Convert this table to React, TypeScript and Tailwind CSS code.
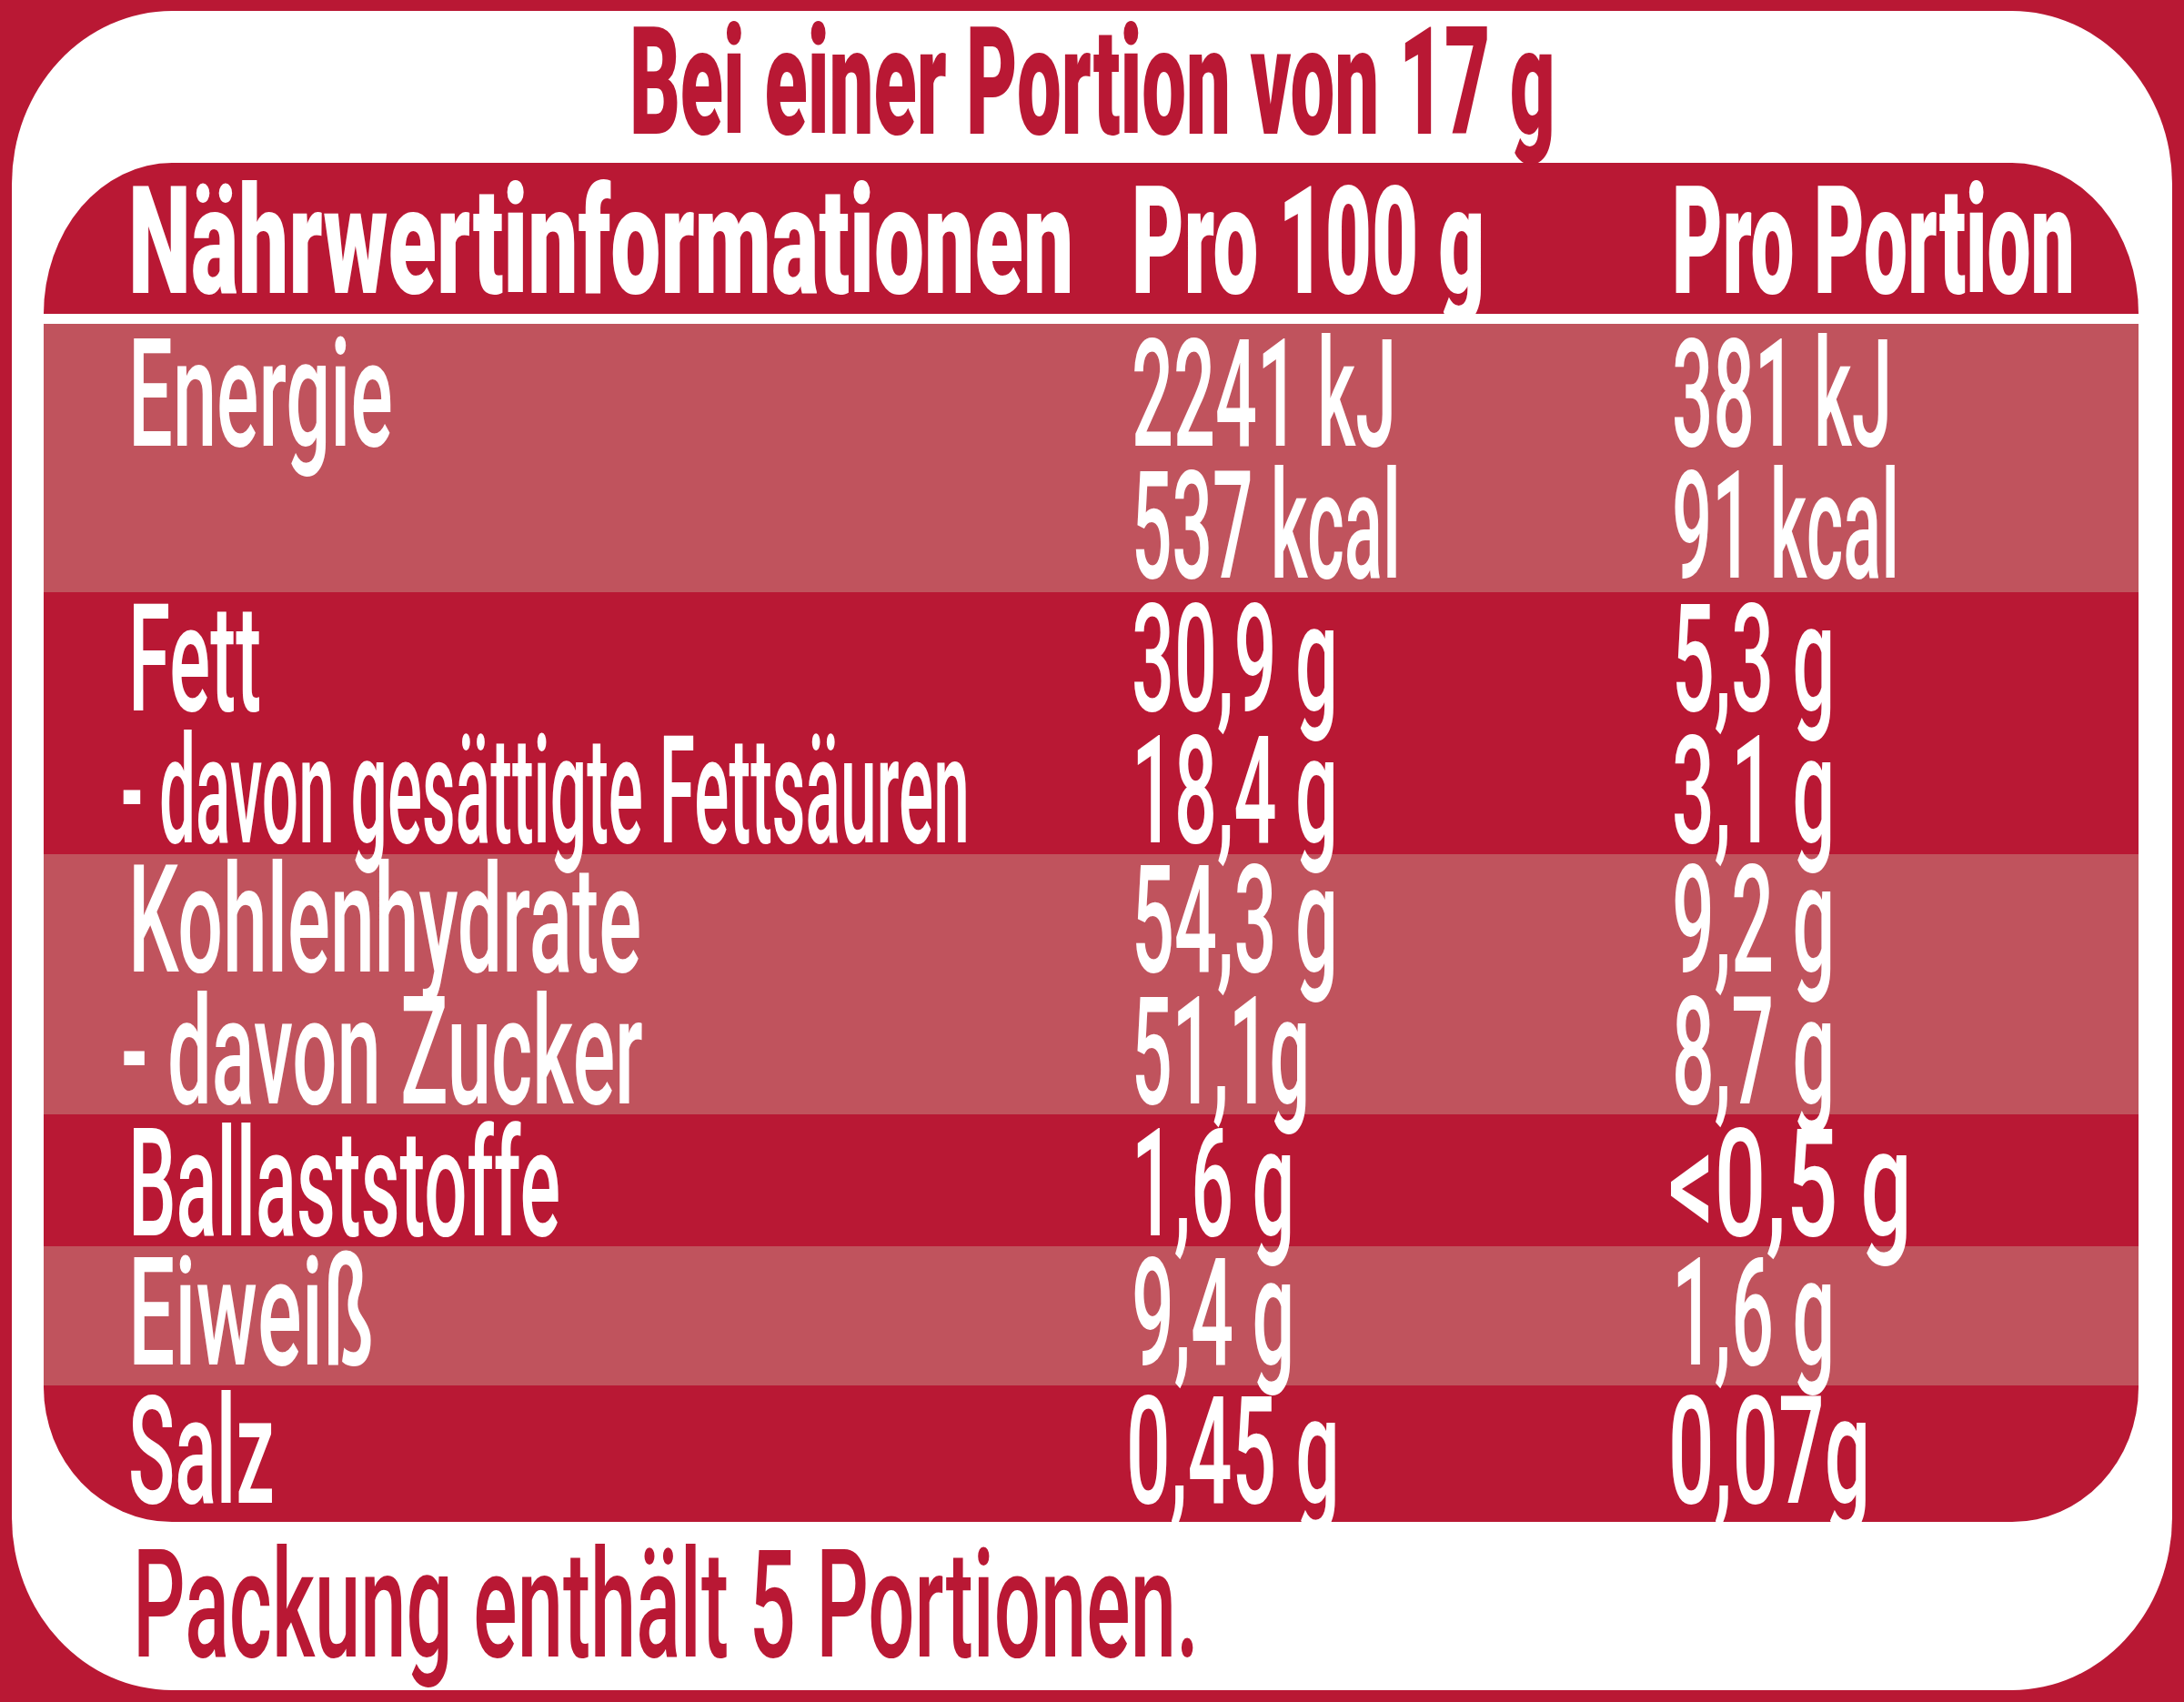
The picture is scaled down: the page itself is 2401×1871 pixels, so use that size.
import { useLayoutEffect, useRef, useState, type ReactNode } from "react";

function Fit({
  w,
  children,
  className = "",
  center = false,
}: {
  w: number;
  children: ReactNode;
  className?: string;
  center?: boolean;
}) {
  const ref = useRef<HTMLSpanElement>(null);
  const [s, setS] = useState(0.5);
  useLayoutEffect(() => {
    const measure = () => {
      const el = ref.current;
      if (!el) return;
      const nat = el.offsetWidth;
      if (nat > 0) setS((w + 8) / nat);
    };
    measure();
    if (document.fonts) document.fonts.ready.then(measure);
  }, [w]);
  return (
    <span
      ref={ref}
      className={`relative z-10 inline-block whitespace-nowrap ${center ? "origin-center" : "origin-left"} ${className}`}
      style={{ transform: `scaleX(${s})` }}
    >
      {children}
    </span>
  );
}

type Line = {
  label?: string;
  lw?: number;
  lcls?: string;
  a: string;
  aw: number;
  acls?: string;
  b: string;
  bw: number;
  bcls?: string;
};

type Band = { cls: string; lines: Line[] };

const bands: Band[] = [
  {
    cls: "bg-[#c0535d] h-[295px] pt-[5px]",
    lines: [
      { label: "Energie", lw: 283, a: "2241 kJ", aw: 283, b: "381 kJ", bw: 234 },
      { a: "537 kcal", aw: 288, b: "91 kcal", bw: 242 },
    ],
  },
  {
    cls: "bg-[#b91834] h-[288px] pt-[1px]",
    lines: [
      { label: "Fett", lw: 138, a: "30,9 g", aw: 219, b: "5,3 g", bw: 171 },
      {
        label: "- davon gesättigte Fettsäuren",
        lw: 925,
        lcls: "-ml-[8px]",
        a: "18,4 g",
        aw: 219,
        b: "3,1 g",
        bw: 171,
      },
    ],
  },
  {
    cls: "bg-[#c0535d] h-[286px]",
    lines: [
      { label: "Kohlenhydrate", lw: 556, a: "54,3 g", aw: 219, b: "9,2 g", bw: 171 },
      {
        label: "- davon Zucker",
        lw: 566,
        lcls: "-ml-[8px]",
        a: "51,1g",
        aw: 188,
        b: "8,7 g",
        bw: 171,
      },
    ],
  },
  {
    cls: "bg-[#b91834] h-[145px] pt-[4px]",
    lines: [
      {
        label: "Ballaststoffe",
        lw: 467,
        a: "1,6 g",
        aw: 171,
        b: "<0,5 g",
        bw: 260,
        bcls: "-ml-[4px]",
      },
    ],
  },
  {
    cls: "bg-[#c0535d] h-[153px] pt-[1px]",
    lines: [{ label: "Eiweiß", lw: 262, a: "9,4 g", aw: 171, b: "1,6 g", bw: 171 }],
  },
  {
    cls: "bg-[#b91834] h-[150px] rounded-bl-[141px_148px] rounded-br-[139px_148px]",
    lines: [
      {
        label: "Salz",
        lw: 153,
        a: "0,45 g",
        aw: 227,
        acls: "-ml-[6px]",
        b: "0,07g",
        bw: 214,
        bcls: "-ml-[4px]",
      },
    ],
  },
];

export default function App() {
  return (
    <div className="w-[2401px] h-[1871px] overflow-hidden bg-[#b91834] pt-[12px] px-[13px] pb-[13px] font-['Roboto',sans-serif] text-white">
      <div className="w-full h-full bg-white rounded-[176px/190px] flex flex-col">
        {/* title */}
        <div className="h-[167px] flex justify-center text-[166px] leading-[157px] font-black text-[#b91834]">
          <Fit w={1010} center>
            Bei einer Portion von 17 g
          </Fit>
        </div>

        {/* table */}
        <div className="ml-[35px] mr-[37px] flex flex-col">
          <div className="h-[166px] bg-[#b91834] rounded-tl-[141px_166px] rounded-tr-[139px_166px] flex text-[166px] leading-[174px] font-black">
            <div className="w-[1196px] shrink-0 pl-[93px]">
              <Fit w={1031}>Nährwertinformationen</Fit>
            </div>
            <div className="w-[594px] shrink-0">
              <Fit w={380}>Pro 100 g</Fit>
            </div>
            <div className="flex-1">
              <Fit w={435}>Pro Portion</Fit>
            </div>
          </div>
          <div className="h-[11px]" />
          {bands.map((band, i) => (
            <div key={i} className={`flex flex-col ${band.cls}`}>
              {band.lines.map((ln, j) => (
                <div key={j} className="h-[145px] shrink-0 flex text-[166px] leading-[145px] font-medium">
                  <div className="w-[1196px] shrink-0 pl-[93px]">
                    {ln.label ? (
                      <Fit w={ln.lw ?? 100} className={ln.lcls ?? ""}>
                        {ln.label}
                      </Fit>
                    ) : null}
                  </div>
                  <div className="w-[594px] shrink-0">
                    <Fit w={ln.aw} className={ln.acls ?? ""}>
                      {ln.a}
                    </Fit>
                  </div>
                  <div className="flex-1">
                    <Fit w={ln.bw} className={ln.bcls ?? ""}>
                      {ln.b}
                    </Fit>
                  </div>
                </div>
              ))}
            </div>
          ))}
        </div>

        {/* footer */}
        <div className="h-[185px] pl-[133px] text-[166px] leading-[184px] font-medium text-[#b91834]">
          <Fit w={1164}>Packung enthält 5 Portionen.</Fit>
        </div>
      </div>
    </div>
  );
}
